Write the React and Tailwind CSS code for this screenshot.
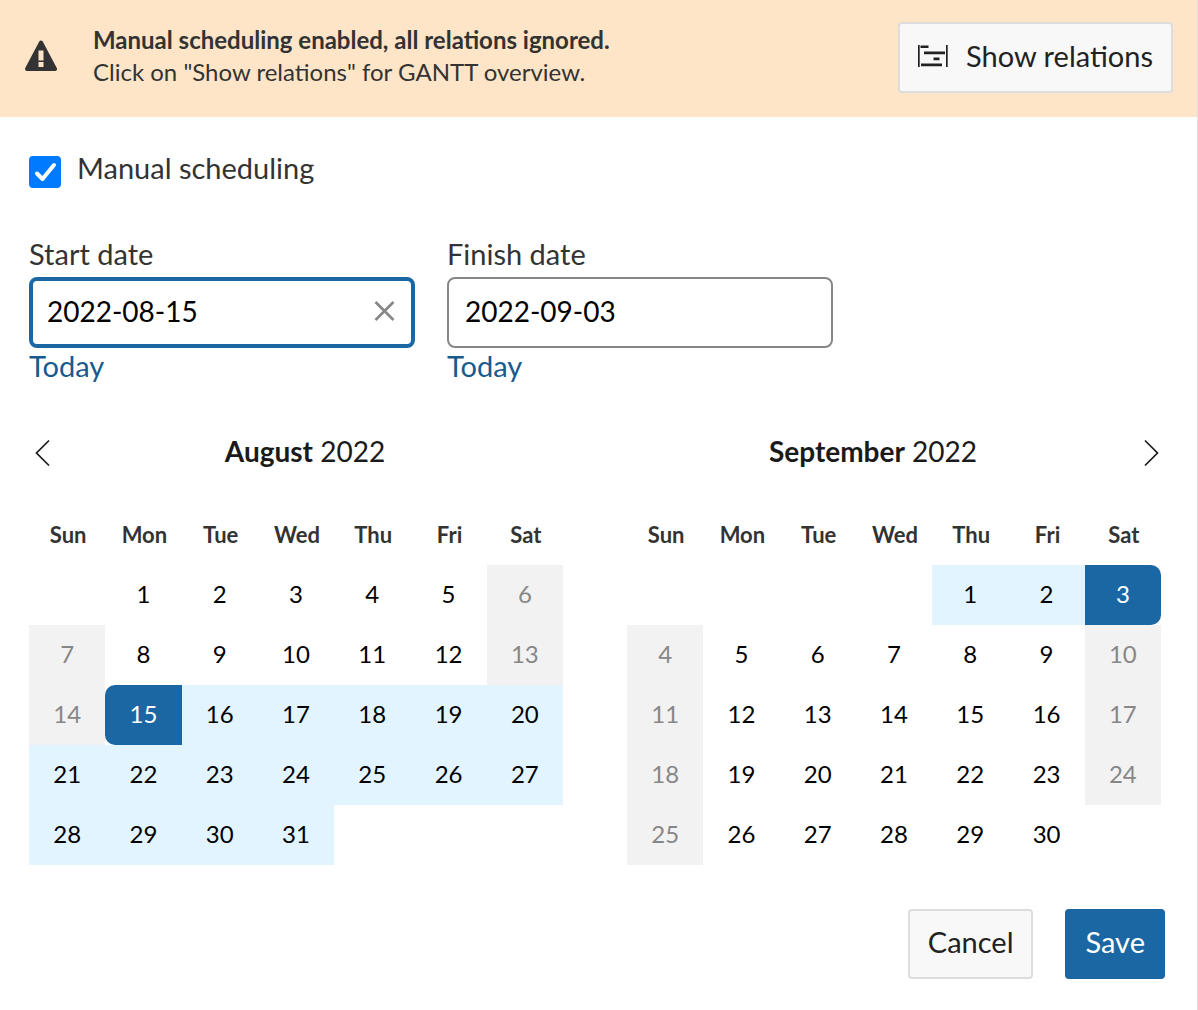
import { useState } from "react";

const WEEKDAYS = ["Sun", "Mon", "Tue", "Wed", "Thu", "Fri", "Sat"];

function WarningIcon() {
  return (
    <svg width="32" height="32" viewBox="0 0 32 32" aria-hidden="true">
      <path d="M16 2.500 30 29H2Z" fill="#333333" stroke="#333333" strokeWidth="4" strokeLinejoin="round" />
      <path d="M13.500 10.500h5v10h-5ZM13.500 22h5v5h-5Z" fill="#ffe5c7" />
    </svg>
  );
}

function GanttIcon() {
  return (
    <svg width="30" height="22" viewBox="0 0 30 22" fill="#222222" aria-hidden="true">
      <path d="M0 0h1.700v22H0ZM28 0h1.700v22H28ZM2.500 .5h8v2.500h-8ZM6 6.500h21v2.700H6ZM15.500 12.500h6v2.700h-6ZM3 18.500h21v2.700H3Z" />
    </svg>
  );
}

function Chevron({ path }) {
  return (
    <svg width="16" height="28" viewBox="0 0 16 28" fill="none" stroke="#1a1a1a" strokeWidth="1.7" aria-hidden="true">
      <path d={path} />
    </svg>
  );
}

function DateField({ id, label, value, onChange, active }) {
  return (
    <div className="flex w-[386px] flex-col items-start">
      <label htmlFor={id} className="text-[29px] leading-[46px] text-[#333333]">
        {label}
      </label>
      <div
        className={
          active
            ? "flex h-[71px] w-full items-center rounded-lg border-4 border-[#1a67a3] pr-4 pb-1 pl-3.5"
            : "flex h-[71px] w-full items-center rounded-lg border-2 border-[#878787] px-4 pb-1"
        }
      >
        <input
          id={id}
          type="text"
          value={value}
          onChange={(e) => onChange(e.target.value)}
          className="min-w-0 flex-1 bg-transparent text-[28px] leading-9 text-black outline-none"
        />
        {active && (
          <button type="button" aria-label="Clear date" onClick={() => onChange("")}>
            <svg width="21" height="20" viewBox="0 0 21 20" stroke="#878787" strokeWidth="2.6" aria-hidden="true">
              <path d="M1.500 1 19.500 19M19.500 1 1.500 19" />
            </svg>
          </button>
        )}
      </div>
      <a href="#today" className="text-[29px] leading-9 text-[#175a8e]">
        Today
      </a>
    </div>
  );
}

const STYLES = {
  plain: "text-black",
  weekend: "bg-[#f2f2f2] text-[#878787]",
  range: "bg-[#e2f4ff] text-black",
  start: "rounded-l-[10px] bg-[#1a67a3] text-white",
  end: "rounded-r-[10px] bg-[#1a67a3] text-white",
};

function Calendar({ label, offset, days, rangeFrom, rangeTo, startDay, endDay }) {
  const count = Math.ceil((offset + days) / 7);
  const weeks = Array.from({ length: count }, (_, w) =>
    Array.from({ length: 7 }, (_, d) => {
      const day = w * 7 + d - offset + 1;
      return day >= 1 && day <= days ? day : null;
    })
  );
  const kind = (day, col) => {
    if (day === startDay) return "start";
    if (day === endDay) return "end";
    if (day >= rangeFrom && day <= rangeTo) return "range";
    return col === 0 || col === 6 ? "weekend" : "plain";
  };
  return (
    <div className="min-w-0 flex-1">
      <table className="w-full table-fixed border-collapse" aria-label={label}>
        <thead>
          <tr>
            {WEEKDAYS.map((name) => (
              <th key={name} scope="col" className="h-[60px] p-0 pb-0.5 pl-0.5 text-[22px] font-bold text-[#333333]">
                {name}
              </th>
            ))}
          </tr>
        </thead>
        <tbody>
          {weeks.map((week, w) => (
            <tr key={w}>
              {week.map((day, col) => (
                <td key={col} className="p-0">
                  {day && (
                    <button type="button" className={"block h-[60px] w-full pb-0.5 text-2xl " + STYLES[kind(day, col)]}>
                      {day}
                    </button>
                  )}
                </td>
              ))}
            </tr>
          ))}
        </tbody>
      </table>
    </div>
  );
}

export default function App() {
  const [manual, setManual] = useState(true);
  const [start, setStart] = useState("2022-08-15");
  const [finish, setFinish] = useState("2022-09-03");

  return (
    <div className="min-h-screen border-r border-[#e0e0e0] bg-white font-[Lato,sans-serif]">
      <header className="flex items-center bg-[#ffe5c7] pt-[22px] pr-6 pb-6 pl-[25px]">
        <div className="flex flex-1 items-center gap-9 pb-1 text-2xl leading-8 text-[#333333]">
          <WarningIcon />
          <div>
            <p className="font-bold">Manual scheduling enabled, all relations ignored.</p>
            <p>Click on "Show relations" for GANTT overview.</p>
          </div>
        </div>
        <button
          type="button"
          className="flex h-[71px] items-center gap-[18px] rounded border-2 border-[#dddddd] bg-[#f8f8f8] px-[18px] pb-1 text-[29px] text-[#222222]"
        >
          <GanttIcon />
          Show relations
        </button>
      </header>

      <main className="pr-8 pl-[29px]">
        <label className="flex items-start gap-4 pt-7 text-[29px] leading-[46px] text-[#333333]">
          <span className="relative mt-[11px] size-8">
            <input
              type="checkbox"
              checked={manual}
              onChange={(e) => setManual(e.target.checked)}
              className="peer block size-8 appearance-none rounded border-2 border-[#878787] checked:border-[#007aff] checked:bg-[#007aff]"
            />
            <svg
              className="pointer-events-none absolute inset-0 hidden peer-checked:block"
              width="32"
              height="32"
              viewBox="0 0 32 32"
              fill="none"
              stroke="#ffffff"
              strokeWidth="4"
              strokeLinecap="round"
              strokeLinejoin="round"
              aria-hidden="true"
            >
              <path d="M8 17.500 13.500 23 25 9" />
            </svg>
          </span>
          Manual scheduling
        </label>

        <div className="mt-10 flex gap-8">
          <DateField id="start-date" label="Start date" value={start} onChange={setStart} active />
          <DateField id="finish-date" label="Finish date" value={finish} onChange={setFinish} />
        </div>

        <div className="mt-[42px] flex text-[28px] leading-[50px] text-[#1a1a1a]">
          <div className="flex flex-1 items-center">
            <button type="button" aria-label="Previous month" className="w-7 pt-1 pl-1.5">
              <Chevron path="M14 1.500 1.500 14 14 26.500" />
            </button>
            <h2 className="flex-1 pr-11 text-center">
              <span className="font-bold">August</span> 2022
            </h2>
          </div>
          <div className="flex flex-1 items-center">
            <h2 className="flex-1 pl-3 text-center">
              <span className="font-bold">September</span> 2022
            </h2>
            <button type="button" aria-label="Next month" className="flex w-7 justify-end pt-1 pr-1.5">
              <Chevron path="M2 1.500 14.500 14 2 26.500" />
            </button>
          </div>
        </div>

        <div className="mt-[29px] flex items-start gap-16 pr-1">
          <Calendar label="August 2022" offset={1} days={31} startDay={15} rangeFrom={16} rangeTo={31} />
          <Calendar label="September 2022" offset={4} days={30} rangeFrom={1} rangeTo={2} endDay={3} />
        </div>

        <div className="mt-11 flex justify-end gap-8 pb-8 text-[29px]">
          <button type="button" className="h-[70px] rounded border-2 border-[#dddddd] bg-[#f8f8f8] px-[18px] pb-1 text-[#222222]">
            Cancel
          </button>
          <button type="button" className="h-[70px] rounded bg-[#1a67a3] px-5 pb-1 text-white">
            Save
          </button>
        </div>
      </main>
    </div>
  );
}
